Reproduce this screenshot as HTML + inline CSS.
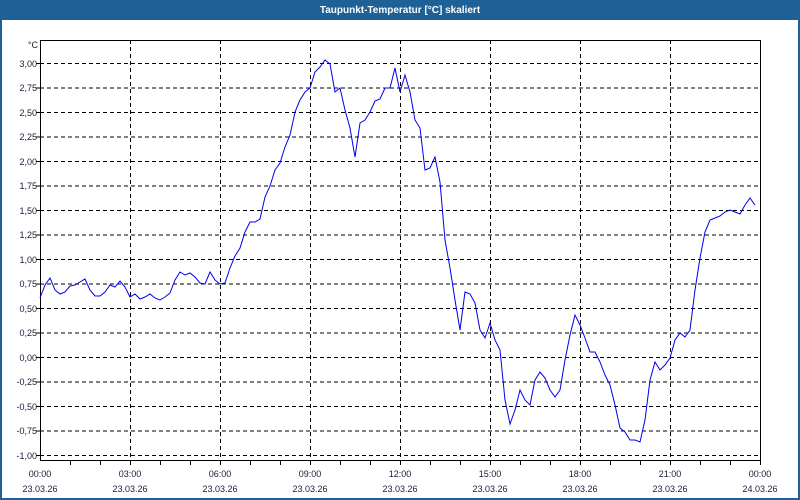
<!DOCTYPE html>
<html><head><style>
html,body{margin:0;padding:0;background:#fff;}
svg{display:block}
text{font-family:"Liberation Sans","DejaVu Sans",sans-serif;font-size:9px;fill:#1a1a3a}
</style></head><body>
<svg width="800" height="500" xmlns="http://www.w3.org/2000/svg">
<rect x="0" y="0" width="800" height="500" fill="#fff"/>
<rect x="0" y="0" width="800" height="20" fill="#1e6196"/>
<rect x="0" y="0" width="2" height="500" fill="#1e6196"/>
<rect x="798" y="0" width="2" height="500" fill="#1e6196"/>
<rect x="0" y="498" width="800" height="2" fill="#1e6196"/>
<text x="400" y="13" text-anchor="middle" style="fill:#fff;font-weight:bold;font-size:10px">Taupunkt-Temperatur [°C] skaliert</text>
<g stroke="#000" stroke-width="1" stroke-dasharray="4,3" shape-rendering="crispEdges">
<path d="M40 63.5H760M40 88H760M40 112.5H760M40 137H760M40 161.5H760M40 186H760M40 210.5H760M40 235H760M40 259.5H760M40 284H760M40 308.5H760M40 333H760M40 357.5H760M40 382H760M40 406.5H760M40 431H760M40 455.5H760"/>
<path d="M130.5 40V461M220.5 40V461M310.5 40V461M400.5 40V461M490.5 40V461M580.5 40V461M670.5 40V461"/>
</g>
<g stroke="#000" stroke-width="1" fill="none" shape-rendering="crispEdges">
<rect x="40.5" y="40.5" width="720" height="420"/>
<path d="M70.5 461v4M100.5 461v4M130.5 461v4M160.5 461v4M190.5 461v4M220.5 461v4M250.5 461v4M280.5 461v4M310.5 461v4M340.5 461v4M370.5 461v4M400.5 461v4M430.5 461v4M460.5 461v4M490.5 461v4M520.5 461v4M550.5 461v4M580.5 461v4M610.5 461v4M640.5 461v4M670.5 461v4M700.5 461v4M730.5 461v4M760.5 461v4M36 63.5h4M36 88h4M36 112.5h4M36 137h4M36 161.5h4M36 186h4M36 210.5h4M36 235h4M36 259.5h4M36 284h4M36 308.5h4M36 333h4M36 357.5h4M36 382h4M36 406.5h4M36 431h4M36 455.5h4"/>
</g>
<g text-anchor="end">
<text x="38" y="48">°C</text>
<text x="37" y="67">3,00</text><text x="37" y="91">2,75</text><text x="37" y="116">2,50</text><text x="37" y="140">2,25</text><text x="37" y="165">2,00</text><text x="37" y="189">1,75</text><text x="37" y="214">1,50</text><text x="37" y="238">1,25</text><text x="37" y="263">1,00</text><text x="37" y="287">0,75</text><text x="37" y="312">0,50</text><text x="37" y="336">0,25</text><text x="37" y="361">0,00</text><text x="37" y="385">-0,25</text><text x="37" y="410">-0,50</text><text x="37" y="434">-0,75</text><text x="37" y="459">-1,00</text>
</g>
<g text-anchor="middle">
<text x="40" y="477">00:00</text><text x="40" y="492">23.03.26</text>
<text x="130" y="477">03:00</text><text x="130" y="492">23.03.26</text>
<text x="220" y="477">06:00</text><text x="220" y="492">23.03.26</text>
<text x="310" y="477">09:00</text><text x="310" y="492">23.03.26</text>
<text x="400" y="477">12:00</text><text x="400" y="492">23.03.26</text>
<text x="490" y="477">15:00</text><text x="490" y="492">23.03.26</text>
<text x="580" y="477">18:00</text><text x="580" y="492">23.03.26</text>
<text x="670" y="477">21:00</text><text x="670" y="492">23.03.26</text>
<text x="760" y="477">00:00</text><text x="760" y="492">24.03.26</text>
</g>
<polyline fill="none" stroke="#0000ee" stroke-width="1" points="40,298 45,285 50,278 55,290 60,294 65,292 70,286 75,285 80,282 85,279 90,290 95,296 100,296 105,292 110,285 115,287 120,281 125,287 130,297 135,294 140,299 145,297 150,294 155,298 160,300 165,297 170,293 175,280 180,272 185,275 190,273 195,277 200,283 205,284 210,272 215,280 220,284 225,283 230,268 235,256 240,248 245,232 250,222 255,222 260,219 265,197 270,186 275,170 280,163 285,147 290,135 295,112 300,100 305,92 310,88 315,72 320,67 325,60 330,64 335,92 340,88 345,110 350,128 355,157 360,123 365,120 370,112 375,101 380,99 385,88 390,88 395,68 400,92 405,75 410,92 415,120 420,128 425,170 430,168 435,157 440,182 445,240 450,268 455,300 460,330 465,292 470,294 475,303 480,330 485,338 490,323 495,340 500,350 505,400 510,424 515,410 520,390 525,400 530,405 535,380 540,372 545,378 550,390 555,397 560,390 565,360 570,335 575,315 580,325 585,338 590,352 595,352 600,362 605,375 610,385 615,405 620,428 625,432 630,440 635,440 640,442 645,420 650,380 655,362 660,370 665,365 670,358 675,340 680,333 685,337 690,330 695,290 700,258 705,232 710,220 715,218 720,216 725,212 730,210 735,212 740,214 745,205 750,198 755,205"/>
</svg>
</body></html>
